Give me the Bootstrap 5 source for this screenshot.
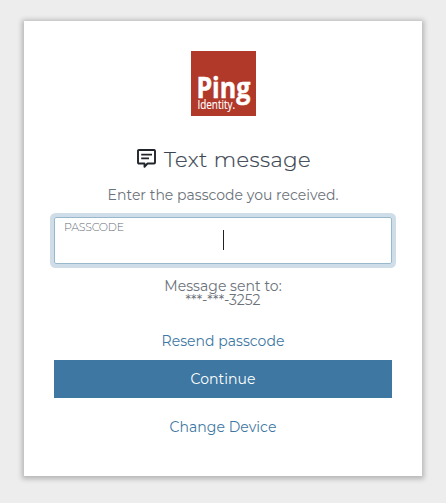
<!DOCTYPE html>
<html lang="en">
<head>
<meta charset="utf-8">
<meta name="viewport" content="width=device-width, initial-scale=1">
<title>Text message</title>
<link href="https://cdn.jsdelivr.net/npm/bootstrap@5.3.0/dist/css/bootstrap.min.css" rel="stylesheet">
<style>
body{background:#ededed;font-family:Montserrat,Inter,sans-serif;font-size:14px;line-height:14px;color:#6b727a;min-height:503px}
.signin{width:398px;height:455px;margin:21px 0 0 24px;padding:30px 30px 0;box-shadow:0 1px 5px 2px rgba(0,0,0,.24)}
.brand{width:65px;height:65px}
.heading{font-size:21px;line-height:26px;font-weight:300;-webkit-text-stroke:.2px #3b4551;color:#3b4551;margin-top:31px;padding-left:2px;letter-spacing:.45px}
.bubble{margin-bottom:3px}
.intro{margin-top:15px;letter-spacing:.02px}
.passbox{width:338px;height:47px;margin-top:15px;border:1px solid #98b9cd;border-radius:2px;box-shadow:0 0 0 4px #cedde7;padding:2px 9px}
.passbox label{font-size:11px;line-height:14px;font-weight:300;color:#686f77;letter-spacing:-.22px}
.caret{width:1px;height:20px;background:#222;left:168px;top:12px}
.sent{margin-top:15px}
.action{color:#3d77a2;text-decoration:none}
.resend{margin-top:27px}
.btn-go{--bs-btn-bg:#3d77a2;--bs-btn-color:#fff;--bs-btn-hover-bg:#336689;--bs-btn-hover-color:#fff;--bs-btn-border-width:0;height:38px;margin-top:12px;font-size:14px;line-height:14px}
.change{margin-top:22px}
.fit-a{letter-spacing:.04px}
</style>
</head>
<body>
<main class="signin bg-white d-flex flex-column align-items-center text-center">
<svg class="brand flex-shrink-0" viewBox="0 0 65 65" role="img" aria-label="Ping Identity"><rect width="65" height="65" fill="#b1392a"/><g fill="#fff" font-family="'Open Sans',sans-serif"><text x="5.400" y="46.700" font-size="29" font-weight="700" stroke="#fff" stroke-width=".5" textLength="54" lengthAdjust="spacingAndGlyphs">Ping</text><text x="6.500" y="58.300" font-size="12.500" stroke="#fff" stroke-width=".15" textLength="37.500" lengthAdjust="spacingAndGlyphs">Identity.</text></g></svg>
<h1 class="heading mb-0 d-flex align-items-center"><svg class="bubble me-2" width="19" height="19" viewBox="0 0 19 19" fill="none" stroke="#20242b" stroke-width="1.900" stroke-linejoin="round"><path d="M2 1h15q1 0 1 1v11.500q0 1-1 1H10.500L7.500 17.800V14.500H2q-1 0-1-1V2q0-1 1-1z"/><path d="M4.200 5.600h10.800M4.200 9.300h7.800" stroke-width="1.700"/></svg><span>Text message</span></h1>
<p class="intro mb-0">Enter the passcode you received.</p>
<div class="passbox position-relative text-start"><label class="d-block">PASSCODE</label><span class="caret position-absolute"></span></div>
<p class="sent mb-0"><span class="fit-a">Message sent to:</span><br><span>***-***-3252</span></p>
<a class="action resend fit-a" href="#">Resend passcode</a>
<button class="btn btn-go w-100 rounded-0 p-0 fit-a" type="button">Continue</button>
<a class="action change fit-a" href="#">Change Device</a>
</main>
<script src="https://cdn.jsdelivr.net/npm/bootstrap@5.3.0/dist/js/bootstrap.bundle.min.js"></script>
</body>
</html>
